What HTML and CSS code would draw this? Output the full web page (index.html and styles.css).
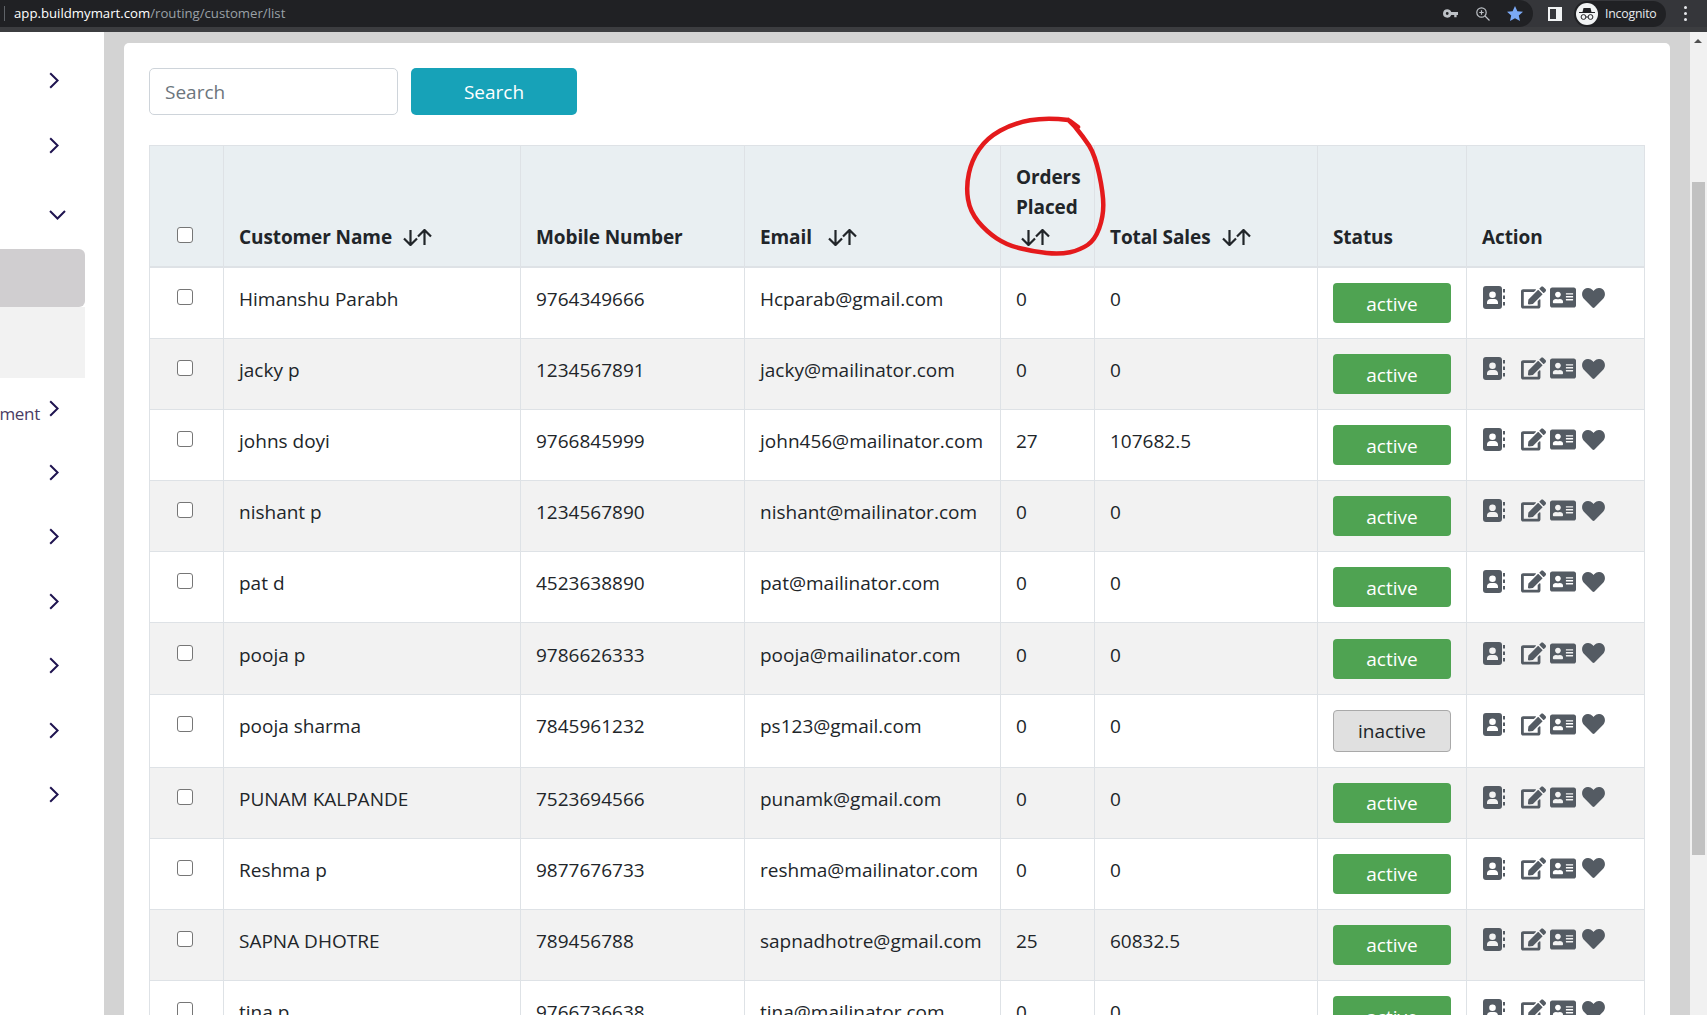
FILE: index.html
```html
<!DOCTYPE html>
<html lang="en">
<head>
<meta charset="utf-8">
<title>Customer list</title>
<link rel="stylesheet" href="styles.css">
</head>
<body>
<svg class="defs" width="0" height="0" aria-hidden="true">
  <symbol id="i-chev" viewBox="0 0 10 17"><path d="M1.2 1.2 8.6 8.5 1.2 15.8" fill="none" stroke="currentColor" stroke-width="2"/></symbol>
  <symbol id="i-sort" viewBox="0 0 30 17"><path d="M8 1v15M1.5 9.5 8 16l6.5-6.5M22 16V1M15.5 7.5 22 1l6.500 6.500" fill="none" stroke="currentColor" stroke-width="2.200"/></symbol>
  <symbol id="i-book" viewBox="0 0 22 23"><path d="M3 0h13a3 3 0 0 1 3 3v17a3 3 0 0 1-3 3H3a3 3 0 0 1-3-3V3a3 3 0 0 1 3-3Zm6.500 5.500a3.300 3.300 0 1 0 0 6.600 3.300 3.300 0 0 0 0-6.600ZM4 18h11v-1.500c0-2-1.700-3.500-3.500-3.500h-4C5.700 13 4 14.500 4 16.500Z" fill-rule="evenodd"/><path d="M20 3h2v3.500h-2zM20 9.500h2V13h-2zM20 16h2v3.500h-2z"/></symbol>
  <symbol id="i-edit" viewBox="0 0 576 512"><path d="M402.600 83.200l90.200 90.200c3.800 3.800 3.800 10 0 13.800L274.400 405.600l-92.800 10.300c-12.400 1.400-22.900-9.100-21.500-21.500l10.300-92.800L388.800 83.200c3.800-3.800 10-3.800 13.800 0zm162-22.900l-48.800-48.800c-15.200-15.200-39.900-15.200-55.200 0l-35.400 35.400c-3.800 3.800-3.800 10 0 13.800l90.200 90.200c3.800 3.800 10 3.800 13.800 0l35.400-35.400c15.200-15.300 15.200-40 0-55.200zM384 346.200V448H64V128h229.800c3.200 0 6.200-1.300 8.500-3.500l40-40c7.600-7.600 2.200-20.500-8.500-20.500H48C21.500 64 0 85.500 0 112v352c0 26.500 21.500 48 48 48h352c26.500 0 48-21.500 48-48V306.200c0-10.700-12.900-16-20.500-8.500l-40 40c-2.200 2.300-3.500 5.300-3.500 8.500z"/></symbol>
  <symbol id="i-card" viewBox="0 32 576 448"><path d="M528 32H48C21.500 32 0 53.500 0 80v352c0 26.500 21.500 48 48 48h480c26.500 0 48-21.500 48-48V80c0-26.500-21.500-48-48-48zm-352 96c35.300 0 64 28.700 64 64s-28.700 64-64 64-64-28.700-64-64 28.700-64 64-64zm112 236.800c0 10.600-10 19.200-22.400 19.200H86.400C74 384 64 375.400 64 364.800v-19.200c0-31.800 30.100-57.600 67.200-57.600h5c12.300 5.100 25.700 8 39.800 8s27.600-2.900 39.800-8h5c37.100 0 67.200 25.800 67.200 57.600v19.200zM512 312c0 4.400-3.600 8-8 8H360c-4.400 0-8-3.600-8-8v-16c0-4.400 3.600-8 8-8h144c4.400 0 8 3.600 8 8v16zm0-64c0 4.400-3.600 8-8 8H360c-4.400 0-8-3.600-8-8v-16c0-4.400 3.600-8 8-8h144c4.400 0 8 3.600 8 8v16zm0-64c0 4.400-3.600 8-8 8H360c-4.400 0-8-3.600-8-8v-16c0-4.400 3.600-8 8-8h144c4.400 0 8 3.600 8 8v16z"/></symbol>
  <symbol id="i-heart" viewBox="0 32 512 448"><path d="M462.300 62.600C407.500 15.900 326 24.300 275.700 76.200L256 96.500l-19.700-20.300C186.100 24.300 104.500 15.900 49.700 62.600c-62.800 53.600-66.100 149.800-9.900 207.900l193.500 199.800c12.500 12.900 32.800 12.900 45.300 0l193.500-199.800c56.300-58.100 53-154.300-9.800-207.900z"/></symbol>
</svg>

<header class="topbar">
  <div class="omnibox">
    <span class="omni-sep"></span>
    <span class="url"><b class="host">app.buildmymart.com</b>/routing/customer/list</span>
    <div class="omni-icons">
      <svg class="ico-key" viewBox="0 0 16 9"><path d="M4.500 0A4.500 4.500 0 0 1 8.800 3H16v3h-1.500v2.500h-2.500V6H8.800A4.500 4.500 0 1 1 4.500 0Zm0 3a1.500 1.500 0 1 0 0 3 1.500 1.500 0 0 0 0-3Z" fill-rule="evenodd"/></svg>
      <svg class="ico-zoom" viewBox="0 0 14 14"><circle cx="5.500" cy="5.500" r="4.700"/><path d="M9 9l4.500 4.500M3.300 5.500h4.400M5.500 3.300v4.400"/></svg>
      <svg class="ico-star" viewBox="0 0 16 15"><path d="M8 0l2.400 5.200 5.600.6-4.200 3.800 1.200 5.400L8 12.200 3 15l1.200-5.400L0 5.800l5.600-.6z"/></svg>
    </div>
  </div>
  <div class="tools">
    <svg class="ico-panel" viewBox="0 0 14 14"><path d="M0 0h14v14H0Zm2 2v10h6V2Z" fill-rule="evenodd"/></svg>
    <div class="chip">
      <svg class="ico-incog" viewBox="0 0 22 22"><circle cx="11" cy="11" r="11" fill="#f1f3f4"/><path d="M7.500 5h7l1 4H19v1H3V9h3.500Z" fill="#202124"/><g fill="none" stroke="#202124" stroke-width="1"><circle cx="7.500" cy="14" r="2.400"/><circle cx="14.500" cy="14" r="2.400"/><path d="M9.900 14h2.200"/></g></svg>
      <span class="chip-text">Incognito</span>
    </div>
    <div class="dots"><i></i><i></i><i></i></div>
  </div>
</header>
<div class="topstrip"></div>

<div class="layout">
  <nav class="sidebar">
    <div class="nav-item nav-first"><svg class="chev"><use href="#i-chev"/></svg></div>
    <div class="nav-item"><svg class="chev"><use href="#i-chev"/></svg></div>
    <div class="nav-item nav-open"><svg class="chev-down" viewBox="0 0 17 10"><path d="M1 1l7.500 7.500L16 1" fill="none" stroke="currentColor" stroke-width="2"/></svg></div>
    <div class="nav-active"></div>
    <div class="nav-sub"></div>
    <div class="nav-item nav-label"><span class="nav-text">ment</span><svg class="chev chev-up"><use href="#i-chev"/></svg></div>
    <div class="nav-item"><svg class="chev"><use href="#i-chev"/></svg></div>
    <div class="nav-item"><svg class="chev"><use href="#i-chev"/></svg></div>
    <div class="nav-item"><svg class="chev"><use href="#i-chev"/></svg></div>
    <div class="nav-item"><svg class="chev"><use href="#i-chev"/></svg></div>
    <div class="nav-item"><svg class="chev"><use href="#i-chev"/></svg></div>
    <div class="nav-item"><svg class="chev"><use href="#i-chev"/></svg></div>
  </nav>

  <main class="main">
    <section class="card">
      <form class="search">
        <input class="search-input" type="text" placeholder="Search">
        <button class="search-btn" type="button">Search</button>
      </form>
      <table class="grid">
        <colgroup>
          <col class="c1"><col class="c2"><col class="c3"><col class="c4"><col class="c5"><col class="c6"><col class="c7"><col class="c8">
        </colgroup>
        <thead>
          <tr>
            <th class="check"><input type="checkbox" class="cb"></th>
            <th>Customer Name<svg class="sort"><use href="#i-sort"/></svg></th>
            <th>Mobile Number</th>
            <th>Email<svg class="sort sort-wide"><use href="#i-sort"/></svg></th>
            <th>Orders Placed <svg class="sort sort-break"><use href="#i-sort"/></svg></th>
            <th>Total Sales<svg class="sort"><use href="#i-sort"/></svg></th>
            <th>Status</th>
            <th>Action</th>
          </tr>
        </thead>
        <tbody>
          <tr><td class="check"><input type="checkbox" class="cb"></td><td>Himanshu Parabh</td><td>9764349666</td><td>Hcparab@gmail.com</td><td>0</td><td>0</td><td><span class="badge on">active</span></td><td><div class="acts"><svg class="a-book"><use href="#i-book"/></svg><svg class="a-edit"><use href="#i-edit"/></svg><svg class="a-card"><use href="#i-card"/></svg><svg class="a-heart"><use href="#i-heart"/></svg></div></td></tr>
          <tr><td class="check"><input type="checkbox" class="cb"></td><td>jacky p</td><td>1234567891</td><td>jacky@mailinator.com</td><td>0</td><td>0</td><td><span class="badge on">active</span></td><td><div class="acts"><svg class="a-book"><use href="#i-book"/></svg><svg class="a-edit"><use href="#i-edit"/></svg><svg class="a-card"><use href="#i-card"/></svg><svg class="a-heart"><use href="#i-heart"/></svg></div></td></tr>
          <tr><td class="check"><input type="checkbox" class="cb"></td><td>johns doyi</td><td>9766845999</td><td>john456@mailinator.com</td><td>27</td><td>107682.5</td><td><span class="badge on">active</span></td><td><div class="acts"><svg class="a-book"><use href="#i-book"/></svg><svg class="a-edit"><use href="#i-edit"/></svg><svg class="a-card"><use href="#i-card"/></svg><svg class="a-heart"><use href="#i-heart"/></svg></div></td></tr>
          <tr><td class="check"><input type="checkbox" class="cb"></td><td>nishant p</td><td>1234567890</td><td>nishant@mailinator.com</td><td>0</td><td>0</td><td><span class="badge on">active</span></td><td><div class="acts"><svg class="a-book"><use href="#i-book"/></svg><svg class="a-edit"><use href="#i-edit"/></svg><svg class="a-card"><use href="#i-card"/></svg><svg class="a-heart"><use href="#i-heart"/></svg></div></td></tr>
          <tr><td class="check"><input type="checkbox" class="cb"></td><td>pat d</td><td>4523638890</td><td>pat@mailinator.com</td><td>0</td><td>0</td><td><span class="badge on">active</span></td><td><div class="acts"><svg class="a-book"><use href="#i-book"/></svg><svg class="a-edit"><use href="#i-edit"/></svg><svg class="a-card"><use href="#i-card"/></svg><svg class="a-heart"><use href="#i-heart"/></svg></div></td></tr>
          <tr><td class="check"><input type="checkbox" class="cb"></td><td>pooja p</td><td>9786626333</td><td>pooja@mailinator.com</td><td>0</td><td>0</td><td><span class="badge on">active</span></td><td><div class="acts"><svg class="a-book"><use href="#i-book"/></svg><svg class="a-edit"><use href="#i-edit"/></svg><svg class="a-card"><use href="#i-card"/></svg><svg class="a-heart"><use href="#i-heart"/></svg></div></td></tr>
          <tr><td class="check"><input type="checkbox" class="cb"></td><td>pooja sharma</td><td>7845961232</td><td>ps123@gmail.com</td><td>0</td><td>0</td><td><span class="badge off">inactive</span></td><td><div class="acts"><svg class="a-book"><use href="#i-book"/></svg><svg class="a-edit"><use href="#i-edit"/></svg><svg class="a-card"><use href="#i-card"/></svg><svg class="a-heart"><use href="#i-heart"/></svg></div></td></tr>
          <tr><td class="check"><input type="checkbox" class="cb"></td><td>PUNAM KALPANDE</td><td>7523694566</td><td>punamk@gmail.com</td><td>0</td><td>0</td><td><span class="badge on">active</span></td><td><div class="acts"><svg class="a-book"><use href="#i-book"/></svg><svg class="a-edit"><use href="#i-edit"/></svg><svg class="a-card"><use href="#i-card"/></svg><svg class="a-heart"><use href="#i-heart"/></svg></div></td></tr>
          <tr><td class="check"><input type="checkbox" class="cb"></td><td>Reshma p</td><td>9877676733</td><td>reshma@mailinator.com</td><td>0</td><td>0</td><td><span class="badge on">active</span></td><td><div class="acts"><svg class="a-book"><use href="#i-book"/></svg><svg class="a-edit"><use href="#i-edit"/></svg><svg class="a-card"><use href="#i-card"/></svg><svg class="a-heart"><use href="#i-heart"/></svg></div></td></tr>
          <tr><td class="check"><input type="checkbox" class="cb"></td><td>SAPNA DHOTRE</td><td>789456788</td><td>sapnadhotre@gmail.com</td><td>25</td><td>60832.5</td><td><span class="badge on">active</span></td><td><div class="acts"><svg class="a-book"><use href="#i-book"/></svg><svg class="a-edit"><use href="#i-edit"/></svg><svg class="a-card"><use href="#i-card"/></svg><svg class="a-heart"><use href="#i-heart"/></svg></div></td></tr>
          <tr><td class="check"><input type="checkbox" class="cb"></td><td>tina p</td><td>9766736638</td><td>tina@mailinator.com</td><td>0</td><td>0</td><td><span class="badge on">active</span></td><td><div class="acts"><svg class="a-book"><use href="#i-book"/></svg><svg class="a-edit"><use href="#i-edit"/></svg><svg class="a-card"><use href="#i-card"/></svg><svg class="a-heart"><use href="#i-heart"/></svg></div></td></tr>
        </tbody>
      </table>
    </section>
  </main>

  <div class="scrollbar">
    <div class="scroll-up"></div>
    <div class="scroll-thumb"></div>
  </div>
</div>

<svg class="scribble" viewBox="0 0 1707 1015" aria-hidden="true">
  <path d="M1068.300 120Q1046.700 117.300 1030 120.300Q1013.300 123.300 1000 130.800Q986.700 138.300 979.200 149.200Q971.700 160 968.900 173.300Q966 186.700 968 199.200Q970 211.700 978.300 221.700Q986.700 231.700 996.700 238.300Q1006.700 245 1020 248.300Q1033.300 251.700 1046.700 253Q1060 254.300 1070 252.200Q1080 250 1087.500 245Q1095 240 1099.200 228.300Q1103.300 216.700 1103.300 205Q1103.300 193.300 1099.200 174.200Q1095 155 1089.200 145.800Q1083.300 136.700 1075 126.700L1068.300 120M1070 121L1078 127"/>
</svg>
</body>
</html>
```
FILE: styles.css
```css
* { box-sizing: border-box; }
html, body { margin: 0; height: 100%; overflow: hidden; }
body {
  display: flex;
  flex-direction: column;
  font-family: "Open Sans", "Noto Sans", sans-serif;
  font-size: 19px;
  color: #212529;
  background: #fff;
  position: relative;
}
.defs { position: absolute; }

/* browser chrome */
.topbar { display: flex; height: 27px; background: #35363a; flex: none; }
.omnibox {
  width: 1533px;
  display: flex;
  align-items: center;
  background: #202124;
  border-radius: 0 14px 14px 0;
}
.omni-sep { width: 1px; height: 15px; margin-left: 4px; background: #5f6368; }
.url { margin: -2px 0 0 9px; font-size: 13.200px; color: #9aa0a6; }
.host { font-weight: 400; color: #fff; }
.omni-icons { margin-left: auto; display: flex; align-items: center; }
.ico-key { width: 15px; height: 9px; margin-right: 1px; fill: #bdc1c6; }
.ico-zoom { width: 14px; height: 14px; margin-left: 17px; margin-right: -1px; fill: none; stroke: #bdc1c6; stroke-width: 1.200; }
.ico-star { width: 16px; height: 15px; margin-left: 18px; margin-right: 10px; fill: #7baaf7; }
.tools { flex: 1; display: flex; align-items: center; }
.ico-panel { width: 14px; height: 14px; margin-left: 15px; fill: #f1f3f4; }
.chip {
  display: flex;
  align-items: center;
  width: 92px;
  height: 26px;
  margin-left: 12px;
  padding-left: 2px;
  background: #202124;
  border-radius: 13px;
}
.ico-incog { width: 22px; height: 22px; flex: none; }
.chip-text { margin-left: 7px; font-size: 12.300px; color: #e8eaed; letter-spacing: -0.2px; }
.dots { margin-left: 18px; display: flex; flex-direction: column; gap: 3px; }
.dots i { display: block; width: 3px; height: 3px; border-radius: 50%; background: #e8eaed; }
.topstrip { height: 5px; flex: none; background: #3c3d40; }

.layout { flex: 1; display: flex; min-height: 0; }

/* sidebar */
.sidebar { width: 104px; flex: none; background: #fff; color: #1f1450; }
.nav-item { height: 64.500px; display: flex; align-items: center; justify-content: flex-end; padding-right: 45px; }
.nav-first { margin-top: 16.500px; }
.nav-open { height: 71.600px; padding-top: 4px; padding-right: 38px; }
.nav-label { height: 62px; gap: 9px; }
.nav-text { color: #4a3b63; font-size: 17px; letter-spacing: -0.3px; padding-top: 8px; }
.chev { width: 10px; height: 17px; flex: none; }
.chev-up { margin-bottom: 1px; }
.chev-down { width: 17px; height: 10px; }
.nav-active { height: 58px; width: 85px; background: #d0ced0; border-radius: 0 6px 6px 0; }
.nav-sub { height: 71px; width: 85px; background: #f2f2f2; }

/* main */
.main { flex: 1; min-width: 0; overflow: hidden; background: #d3d3d3; padding: 11px 20px 0; }
.card { background: #fff; border-radius: 5px 5px 0 0; padding: 25px 25px 0; }
.search { display: flex; gap: 13px; margin: 0 0 30px; }
.search-input {
  width: 249px;
  height: 47px;
  padding: 0 15px;
  border: 1px solid #ced4da;
  border-radius: 5px;
  font: inherit;
  color: #212529;
  outline: none;
}
.search-input::placeholder { color: #6c757d; opacity: 1; }
.search-btn {
  width: 166px;
  height: 47px;
  border: 0;
  border-radius: 5px;
  background: #17a2b8;
  color: #fff;
  font: inherit;
}

/* table */
.grid { width: 1495px; table-layout: fixed; border-collapse: collapse; }
.c1 { width: 74px; } .c2 { width: 297px; } .c3 { width: 224px; } .c4 { width: 256px; }
.c5 { width: 94px; } .c6 { width: 223px; } .c7 { width: 149px; } .c8 { width: 178px; }
.grid th, .grid td { border: 1px solid #dee2e6; line-height: 30px; padding: 16.100px 15px 14px; vertical-align: top; text-align: left; }
.grid th { vertical-align: bottom; background: #e9eff2; font-weight: 700; letter-spacing: -0.1px; padding: 16px 15px 14px; border-bottom-width: 2px; }
.grid tbody tr:nth-child(even) td { background: #f2f2f2; }
.grid .check { text-align: left; padding-left: 27px; }
.cb {
  appearance: none;
  display: block;
  width: 16px;
  height: 16px;
  margin: 5px 0 0;
  background: #fff;
  border: 1.500px solid #767676;
  border-radius: 3px;
}
th .cb { margin-bottom: 9px; }
.sort { width: 31px; height: 17px; margin-left: 10px; vertical-align: -2px; }
.sort-wide { margin-left: 15px; }
.sort-break { margin-left: 4px; }
.badge {
  display: flex;
  align-items: center;
  justify-content: center;
  width: 118px;
  height: 40px;
  margin: -1px 0 1px;
  border-radius: 4px;
  padding-top: 1px;
}
.on { background: #4fa352; color: #fff; }
.off { height: 42px; background: #e0e0e0; color: #212529; border: 1px solid #a9a9a9; }
.acts { display: flex; align-items: center; height: 23px; margin-top: 2px; padding-left: 1px; fill: #545b63; }
.a-book { width: 22px; height: 23px; }
.a-edit { width: 25px; height: 23px; margin-left: 16px; }
.a-card { width: 26px; height: 21px; margin-left: 4px; }
.a-heart { width: 23px; height: 20px; margin-left: 6px; }

/* page scrollbar */
.scrollbar { width: 17px; flex: none; background: #f1f1f1; position: relative; }
.scroll-up {
  position: absolute; left: 4px; top: 7px;
  width: 0; height: 0;
  border: 4px solid transparent;
  border-top: 0;
  border-bottom: 4px solid #505050;
}
.scroll-thumb { position: absolute; left: 2px; right: 2px; top: 150px; height: 673px; background: #c1c1c1; }

.scribble { position: absolute; left: 0; top: 0; width: 1707px; height: 1015px; pointer-events: none; fill: none; stroke: #e41a1c; stroke-width: 4.500px; stroke-linecap: round; stroke-linejoin: round; }
```
